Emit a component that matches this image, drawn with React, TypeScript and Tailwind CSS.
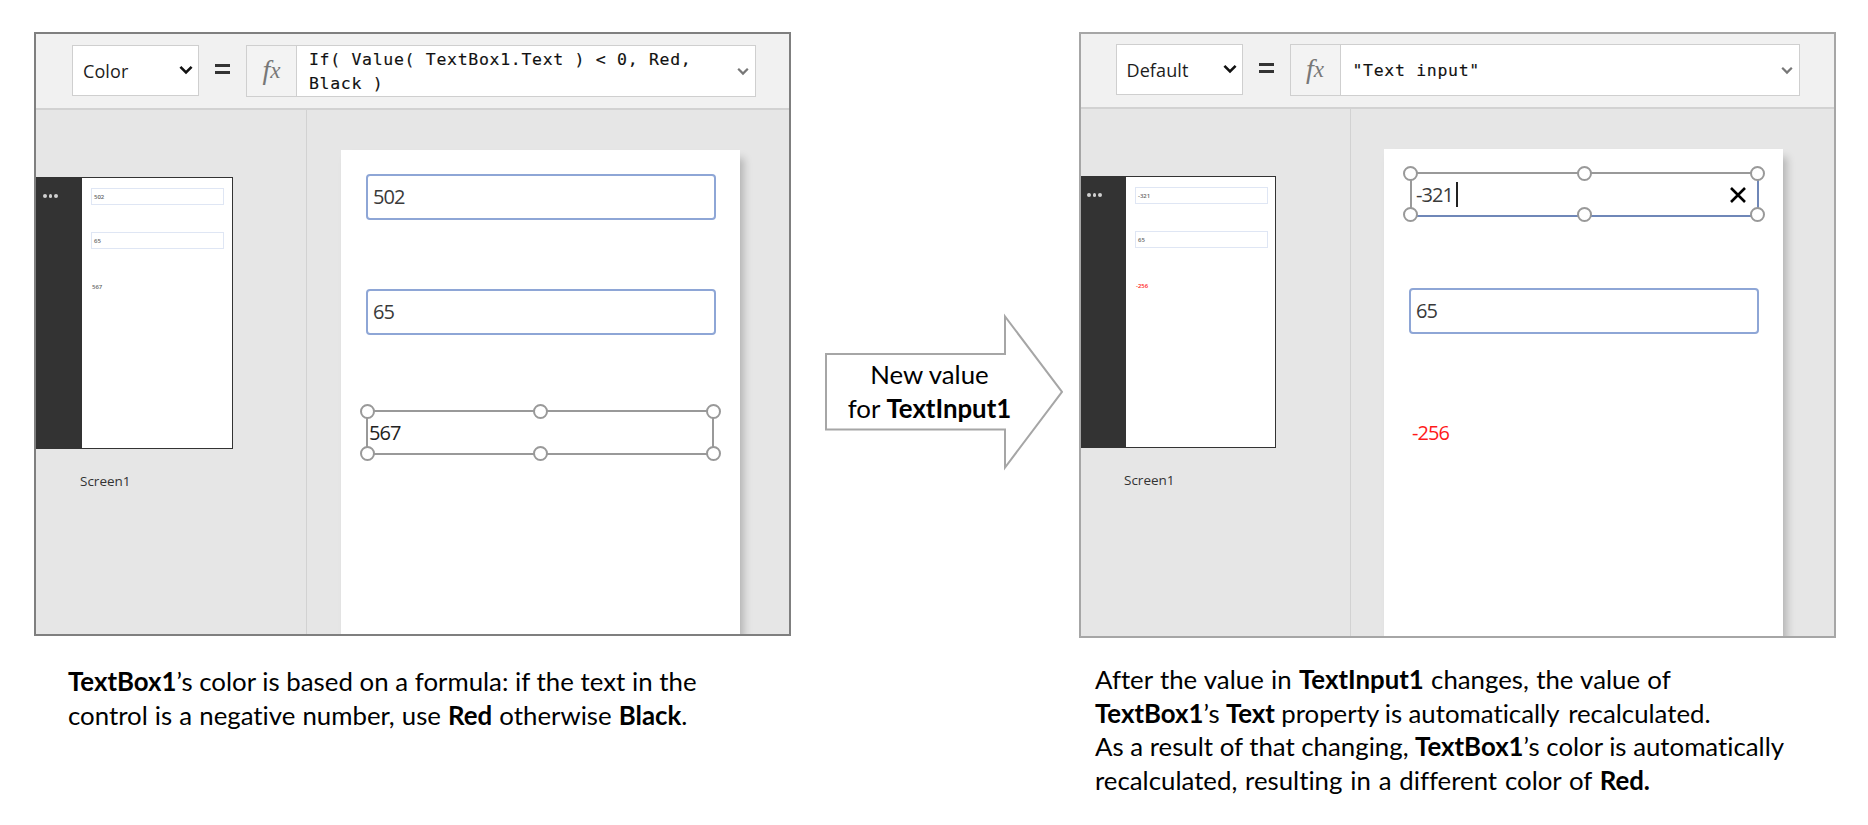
import React from "react";

const HANDLES = ["start", "mid", "end"];

function Caret({ className }: { className: string }) {
  return (
    <svg viewBox="0 0 14 10" className={className} fill="none" stroke="currentColor">
      <path d="M1.4 1.8 L7 7.4 L12.6 1.8" strokeWidth="2.6" />
    </svg>
  );
}

function HandleRow() {
  return (
    <div className="flex justify-between">
      {HANDLES.map((h) => (
        <span key={h} className="size-[15px] rounded-full border-2 border-[#999] bg-white" />
      ))}
    </div>
  );
}

function Selection({ className }: { className: string }) {
  return (
    <div className={`absolute flex flex-col justify-between ${className}`}>
      <HandleRow />
      <HandleRow />
    </div>
  );
}

type PanelProps = {
  frame: string;
  header: string;
  sidebar: string;
  property: string;
  formula: React.ReactNode;
  values: [string, string, string];
  editing?: boolean;
};

function Panel({ frame, header, sidebar, property, formula, values, editing }: PanelProps) {
  return (
    <section className={`flex w-[757px] flex-col overflow-hidden border-2 bg-[#e6e6e6] ${frame}`}>
      <header className={`flex shrink-0 items-start border-b-2 border-[#d2d2d2] bg-[#f1f1f1] font-['Open_Sans',sans-serif] ${header}`}>
        <div className="flex h-[51px] w-[127px] items-center justify-between border-[1.5px] border-[#cfcfcf] bg-white pr-[5px] pl-[10px]">
          <span className="translate-y-px text-[18px] tracking-[0.1px] text-[#1c1c1c]">{property}</span>
          <Caret className="h-[10px] w-[14px] -translate-y-[1px] text-[#111]" />
        </div>
        <div className="mt-[19px] ml-[16px] flex h-[10px] w-[15px] flex-col justify-between">
          <span className="h-[3px] bg-[#333]" />
          <span className="h-[3px] bg-[#333]" />
        </div>
        <div className="ml-[16px] flex h-[52px] w-[510px] border-[1.5px] border-[#cfcfcf] bg-white">
          <div className="flex w-[50px] items-center justify-center border-r-[1.5px] border-[#cfcfcf] bg-[#f3f3f3] pb-[2px] font-['Liberation_Serif',serif] text-[#777] italic">
            <span className="text-[28px] leading-none">f</span>
            <span className="text-[23px] leading-none">x</span>
          </div>
          <div className="flex flex-1 items-center pl-[12px] font-['DejaVu_Sans_Mono',monospace] text-[16.5px] leading-[24px] tracking-[0.69px] whitespace-pre text-[#111] [-webkit-text-stroke:0.15px_#111]">
            <div className="translate-y-px">{formula}</div>
          </div>
          <Caret className="mt-[21px] mr-[6px] h-[9px] w-[12px] text-[#777]" />
        </div>
      </header>

      <div className="flex min-h-0 flex-1">
        <aside className={`shrink-0 border-r-[1.5px] border-[#d2d2d2] pt-[67px] ${sidebar}`}>
          <div className={`flex h-[272px] border-[1.5px] border-l-0 border-[#333] bg-white ${editing ? "w-[195px]" : "w-[197px]"}`}>
            <div className={`flex gap-[2px] bg-[#333] pt-[16px] ${editing ? "w-[45px] pl-[6px]" : "w-[46px] pl-[7px]"}`}>
              {HANDLES.map((h) => (
                <span key={h} className="size-[3.5px] rounded-full bg-[#d0d0d0]" />
              ))}
            </div>
            <div className="flex flex-col pl-[9px] font-['Open_Sans',sans-serif] text-[6px] leading-none font-semibold text-[#666]">
              <div className="mt-[10px] flex h-[17px] w-[133px] items-center border border-[#dfe6f4] pt-px pl-[2px]">{values[0]}</div>
              <div className="mt-[27px] flex h-[17px] w-[133px] items-center border border-[#dfe6f4] pl-[2px]">{values[1]}</div>
              <div className={`mt-[35px] pl-[1px] ${editing ? "text-[#ff1a1a]" : ""}`}>{values[2]}</div>
            </div>
          </div>
          <div className={`mt-[23px] font-['Open_Sans',sans-serif] text-[13.5px] leading-[19px] text-[#333] ${editing ? "pl-[43px]" : "pl-[44px]"}`}>Screen1</div>
        </aside>

        <div className="mt-[40px] ml-[33px] flex w-[399px] shrink-0 flex-col bg-white pl-[25px] font-['Open_Sans',sans-serif] text-[20px] tracking-[-0.9px] text-[#3a3a3a] shadow-[5px_7px_8px_-1px_rgba(0,0,0,0.22)]">
          {editing ? (
            <div className="relative mt-[23px] ml-px flex h-[45px] w-[349px] items-center border-2 border-t-[#999] border-r-[#6f87b8] border-b-[#6f87b8] border-l-[#999] pr-[11px] pl-[4px]">
              <span>{values[0]}</span>
              <span className="ml-[3px] h-[25px] w-[2px] bg-[#222]" />
              <svg viewBox="0 0 16 16" className="ml-auto size-[16px]" stroke="#000" strokeWidth="2.6">
                <path d="M1 1 L15 15 M15 1 L1 15" />
              </svg>
              <Selection className="-top-[8px] -right-[8px] -bottom-[7px] -left-[9px]" />
            </div>
          ) : (
            <div className="mt-[24px] flex h-[46px] w-[350px] items-center rounded-[4px] border-2 border-[#8ea6d6] pl-[5px]">{values[0]}</div>
          )}
          <div className={`flex h-[46px] w-[350px] items-center rounded-[4px] border-2 border-[#8ea6d6] pl-[5px] ${editing ? "mt-[71px]" : "mt-[69px]"}`}>{values[1]}</div>
          {editing ? (
            <div className="mt-[76px] flex h-[45px] items-center pl-[3px] text-[#ff1a1a]">{values[2]}</div>
          ) : (
            <div className="relative mt-[75px] flex h-[45px] w-[348px] items-center border-2 border-[#999] pt-px pl-px text-[#222]">
              {values[2]}
              <Selection className="-top-[8px] -right-[9px] -bottom-[8px] -left-[8px]" />
            </div>
          )}
        </div>
      </div>
    </section>
  );
}

function Line({ className, children }: { className?: string; children: React.ReactNode }) {
  return <div className={`h-[33.7px] whitespace-nowrap ${className ?? ""}`}>{children}</div>;
}

export default function App() {
  return (
    <main className="flex h-[825px] w-[1868px] items-start overflow-hidden bg-white pt-[32px] pl-[34px] font-['Lato',sans-serif] text-[25.8px] leading-[33.7px] text-black [font-variant-ligatures:none]">
      <div className="w-[757px]">
        <Panel
          frame="h-[604px] border-[#7f7f7f]"
          header="h-[76px] pt-[11px] pl-[36px]"
          sidebar="w-[271px] mr-px"
          property="Color"
          formula={"If( Value( TextBox1.Text ) < 0, Red,\nBlack )"}
          values={["502", "65", "567"]}
        />
        <div className="mt-[29px] pl-[34px]">
          <Line className="[word-spacing:0.1px]"><b>TextBox1</b>’s color is based on a formula: if the text in the</Line>
          <Line className="[word-spacing:0.5px]">control is a negative number, use <b>Red</b> otherwise <b>Black</b>.</Line>
        </div>
      </div>

      <div className="relative mt-[281px] ml-[34px] h-[158px] w-[238px] pt-[45px]">
        <svg viewBox="0 0 238 158" className="absolute inset-0 h-[158px] w-[238px]" fill="white" stroke="#a6a6a6" strokeWidth="2">
          <path d="M1 41 H180 V3.5 L237 78.8 L180 154.5 V116.5 H1 Z" />
        </svg>
        <div className="relative flex w-[209px] flex-col items-center">
          <Line>New value</Line>
          <Line>for <b>TextInput1</b></Line>
        </div>
      </div>

      <div className="ml-[16px] w-[757px]">
        <Panel
          frame="h-[606px] border-[#a6a6a6]"
          header="h-[75px] pt-[10px] pl-[34.5px]"
          sidebar="w-[270px]"
          property="Default"
          formula={'"Text input"'}
          values={["-321", "65", "-256"]}
          editing
        />
        <div className="mt-[25px] pl-[16px]">
          <Line className="[word-spacing:0.7px]">After the value in <b>TextInput1</b> changes, the value of</Line>
          <Line className="[word-spacing:-0.3px]"><b>TextBox1</b>’s <b>Text</b> property is automatically <span className="ml-[3px]">recalculated.</span></Line>
          <Line>As a result of that changing, <b>TextBox1</b>’s color is automatically</Line>
          <Line className="[word-spacing:1.2px]">recalculated, resulting in a different color of <b>Red.</b></Line>
        </div>
      </div>
    </main>
  );
}
